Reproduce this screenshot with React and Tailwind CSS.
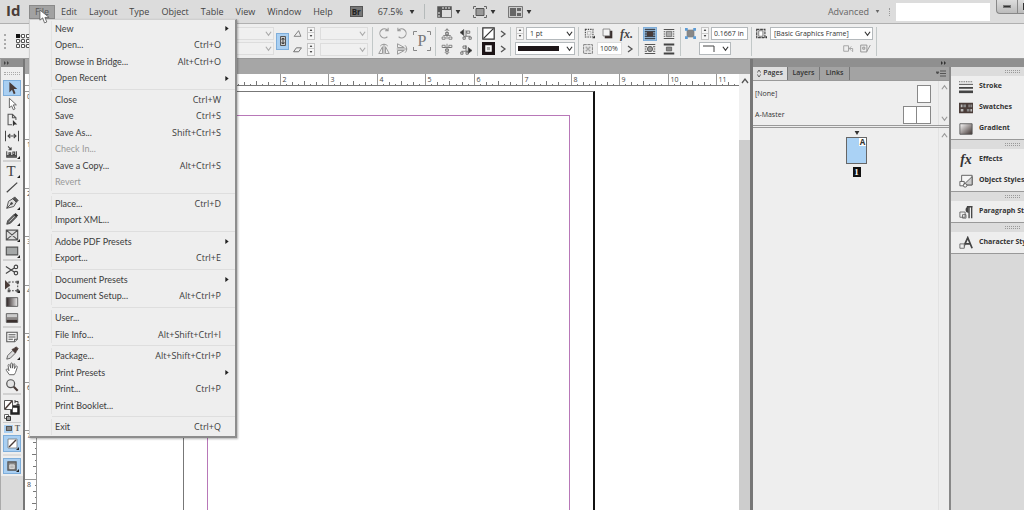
import { Fragment } from 'react';

const fileMenu = [
  [
    { label: 'New', sub: true },
    { label: 'Open...', keys: 'Ctrl+O' },
    { label: 'Browse in Bridge...', keys: 'Alt+Ctrl+O' },
    { label: 'Open Recent', sub: true },
  ],
  [
    { label: 'Close', keys: 'Ctrl+W' },
    { label: 'Save', keys: 'Ctrl+S' },
    { label: 'Save As...', keys: 'Shift+Ctrl+S' },
    { label: 'Check In...', disabled: true },
    { label: 'Save a Copy...', keys: 'Alt+Ctrl+S' },
    { label: 'Revert', disabled: true },
  ],
  [{ label: 'Place...', keys: 'Ctrl+D' }, { label: 'Import XML...' }],
  [{ label: 'Adobe PDF Presets', sub: true }, { label: 'Export...', keys: 'Ctrl+E' }],
  [{ label: 'Document Presets', sub: true }, { label: 'Document Setup...', keys: 'Alt+Ctrl+P' }],
  [{ label: 'User...' }, { label: 'File Info...', keys: 'Alt+Shift+Ctrl+I' }],
  [
    { label: 'Package...', keys: 'Alt+Shift+Ctrl+P' },
    { label: 'Print Presets', sub: true },
    { label: 'Print...', keys: 'Ctrl+P' },
    { label: 'Print Booklet...' },
  ],
  [{ label: 'Exit', keys: 'Ctrl+Q' }],
];

const menus = ['Edit', 'Layout', 'Type', 'Object', 'Table', 'View', 'Window', 'Help'];

// Small drawings, all on a 16x16 grid
const icons = {
  select: <path d="M5 1v12l3-3 2 5 2-1-2-5h4z" fill="#4a3c38" />,
  direct: <path d="M5 1.500v11l2.500-2.500 2 4.500 2-1-2-4.500h3.500z" fill="#fff" stroke="#555" />,
  page: (
    <g fill="none" stroke="#555" strokeWidth="1.200">
      <path d="M8 13.500H3.500v-12h5l4 4V8M8.500 1.500v4h4" />
      <path d="M9 8v7l2-2h3z" fill="#333" stroke="none" />
    </g>
  ),
  gap: (
    <path d="M.5 2v12M15.500 2v12M3 8h10M6 5.500L3.500 8 6 10.500M10 5.500L12.500 8 10 10.500" fill="none" stroke="#444" strokeWidth="1.300" />
  ),
  collect: (
    <g fill="none" stroke="#444" strokeWidth="1.200">
      <path d="M2 7v7h11V7M3.500 1.500l3.500 4M7 2.500v3H4M4.500 11V9h2v2zM9 11V8h2v3z" />
      <path d="M2 12.500h11" strokeWidth="2" />
    </g>
  ),
  type: (
    <text x="7" y="14" textAnchor="middle" fontSize="17" fill="#444" fontFamily="Liberation Serif, serif">T</text>
  ),
  line: <path d="M2 14L14 3" stroke="#444" strokeWidth="1.400" />,
  pen: (
    <g stroke="#444" fill="#ddd">
      <path d="M2 14l2-8 5-3 4 4-3 5z" />
      <path d="M9 3l2-2 4 4-2 2z" fill="#555" />
      <path d="M2 14l5-5" />
      <circle cx="7.500" cy="8.500" r="1" fill="#444" />
    </g>
  ),
  pencil: (
    <g>
      <path d="M2 14l1-4 7-7 3 3-7 7z" fill="#666" stroke="#444" />
      <path d="M10 3l2-2 3 3-2 2z" fill="#333" />
      <path d="M5 11l6-6" stroke="#ccc" />
    </g>
  ),
  frame: <path d="M1.500 2.500h13v11h-13zM1.500 2.500l13 11M14.500 2.500l-13 11" fill="#ddd" stroke="#555" strokeWidth="1.300" />,
  rect: <path d="M1.500 3.500h13v9h-13z" fill="#a5a8a8" stroke="#555" strokeWidth="1.300" />,
  scissors: (
    <g fill="none" stroke="#444" strokeWidth="1.300">
      <circle cx="12.500" cy="4.500" r="2" />
      <circle cx="12.500" cy="11.500" r="2" />
      <path d="M1 4l10 6.500M1 12l10-6.500" />
    </g>
  ),
  transform: (
    <g>
      <path d="M4.500 3.500h10v10h-10z" fill="none" stroke="#444" strokeWidth="1.200" strokeDasharray="2 1.500" />
      <path d="M0 1v11l6-5z" fill="#4a3c38" />
      <path d="M13 2h3v3h-3zM13 12h3v3h-3zM3 12h3v3H3z" fill="#555" />
    </g>
  ),
  gradient: <path d="M1.500 3h13v10h-13z" fill="url(#gradH)" stroke="#555" />,
  feather: (
    <g>
      <path d="M1.500 3h13v10h-13z" fill="#ccc" stroke="#555" />
      <path d="M2 7h12v3H2z" fill="#8a8685" />
      <path d="M2 10h12v3H2z" fill="#3b302e" />
    </g>
  ),
  note: (
    <g fill="#f4f4f4" stroke="#555" strokeWidth="1.200">
      <path d="M2 2.500h12v8l-3 3H2z" />
      <path d="M4 5.500h8M4 8h8M4 10.500h5M14 10.500h-3v3" />
    </g>
  ),
  dropper: (
    <g>
      <path d="M2 15l1-4 6-6 3 3-6 6z" fill="#ddd" stroke="#555" />
      <path d="M8 4l2-1 3-2 2 2-2 3-1 2z" fill="#4a3c38" stroke="#4a3c38" />
    </g>
  ),
  hand: (
    <path
      d="M5 14.500L1.500 9.500c-.5-1.500 1-2 2-1l1 1.500L3.500 4c0-1.500 1.500-1.500 2-.2L6.500 7V2.200c.2-1.500 1.800-1.500 2 0V7l1-4.300c.5-1.200 2-.8 1.800.5L10.800 7.500l1.500-2.500c.8-1 2-.2 1.700 1l-2 6-1.500 2.500z"
      fill="#fff" stroke="#555"
    />
  ),
  zoom: (
    <g fill="none">
      <circle cx="6.500" cy="6.500" r="4.500" fill="#e4e4e4" stroke="#555" strokeWidth="1.400" />
      <path d="M10 10l4.500 4.500" stroke="#4a3c38" strokeWidth="2.400" />
    </g>
  ),
  applyFill: (
    <g>
      <path d="M1.500 1.500h13v13h-13z" fill="#fff" stroke="#666" />
      <path d="M3 13L13 3" stroke="#4a3c38" strokeWidth="2" />
    </g>
  ),
  normalView: (
    <g>
      <path d="M2.500 2.500h11v11h-11z" fill="#888" stroke="#555" strokeWidth="1.500" />
      <path d="M5 6.500h6v5H5z" fill="#bbb" stroke="#eee" />
    </g>
  ),
  angle: <path d="M2 13h12L10 3z" fill="none" stroke="#666" strokeWidth="1.400" />,
  shear: <path d="M1 12h9l5-7H6z" fill="none" stroke="#666" strokeWidth="1.600" />,
  rotateCw: <path d="M12.500 13a6 6 0 1 1 .5-8.500M13.500 1v4h-4" fill="none" stroke="#999" strokeWidth="1.400" />,
  rotateCcw: <path d="M3.500 13A6 6 0 1 0 3 4.500M2.500 1v4h4" fill="none" stroke="#999" strokeWidth="1.400" />,
  flipH: (
    <path d="M8 1v14M1 14l5-9v9zM15 14l-5-9v9zM3 4a6 5 0 0 1 10 0" fill="none" stroke="#999" strokeWidth="1.300" />
  ),
  flipV: (
    <path d="M1 8h14M2 1l9 5H2zM2 15l9-5H2zM12 3a5 6 0 0 1 0 10" fill="none" stroke="#999" strokeWidth="1.300" />
  ),
  treeUp: <path d="M8 1v14M5 4l3-3 3 3M6 6h4v3H6zM3 10h10M1.500 12h4v3h-4zM10.500 12h4v3h-4z" fill="none" stroke="#666" />,
  treeLeft: (
    <g fill="none" stroke="#555">
      <path d="M8 3v8M5 11h9M4 12h3v3H4zM12 12h3v3h-3zM9 4h4v3H9z" />
      <path d="M0 6l5-4v8z" fill="#333" />
    </g>
  ),
  treeDown: <path d="M8 1v14M5 12l3 3 3-3M6 8h4v3H6zM3 6h10M1.500 3h4v3h-4zM10.500 3h4v3h-4z" fill="none" stroke="#666" />,
  treeRight: (
    <g fill="none" stroke="#555">
      <path d="M8 3v8M2 11h9M1 12h3v3H1zM8 12h3v3H8zM4 4h4v3H4z" />
      <path d="M16 10l-5-4v8z" fill="#333" />
    </g>
  ),
  noFill: (
    <g>
      <path d="M1 1h14v14H1z" fill="#fff" stroke="#333" strokeWidth="1.500" />
      <path d="M2 14L14 2" stroke="#333" strokeWidth="1.500" />
    </g>
  ),
  strokeBox: (
    <g>
      <path d="M0 0h16v16H0z" fill="#1c1416" />
      <path d="M5 5h6v6H5z" fill="#aaa" stroke="#fff" strokeWidth="2" />
    </g>
  ),
  dashed: (
    <g fill="none" stroke="#444">
      <path d="M2 2h11v11H2z" strokeWidth="1.600" strokeDasharray="2 1.500" />
      <path d="M5 5h5v5H5z" stroke="#aaa" />
      <path d="M12 15h4v-4z" fill="#333" stroke="none" />
    </g>
  ),
  shadow: (
    <g>
      <path d="M4 4h11v11H4z" fill="#3b302e" />
      <path d="M1.500 1.500h10v10h-10z" fill="#f4f4f4" stroke="#666" />
    </g>
  ),
  opacity: (
    <g fill="none" stroke="#777">
      <path d="M1 1h14v14H1z" strokeWidth="1.500" strokeDasharray="5 1" />
      <path d="M4 4h3v3H4zM9 4h3v3H9zM6 6h4v4H6zM4 9h3v3H4zM9 9h3v3H9z" fill="#aaa" stroke="none" />
    </g>
  ),
  wrapNone: (
    <g>
      <path d="M1 2h14M1 5h14M1 8h14M1 11h14M1 14h14" stroke="#3d4650" strokeWidth="1.700" />
      <path d="M4 5h8v6H4z" fill="#4a3c38" />
    </g>
  ),
  wrapBox: (
    <g>
      <path d="M1 2h14M1 14h14M1 5h2M1 8h2M1 11h2M13 5h2M13 8h2M13 11h2" stroke="#555" strokeWidth="1.600" />
      <path d="M4.500 4.500h7v7h-7z" fill="#aaa" stroke="#666" />
    </g>
  ),
  wrapShape: (
    <g>
      <path d="M1 2h14M1 14h14M1 5h3M1 8h2M1 11h3M12 5h3M13 8h2M12 11h3" stroke="#555" strokeWidth="1.600" />
      <circle cx="8" cy="8" r="3.500" fill="#999" stroke="#444" />
    </g>
  ),
  wrapJump: (
    <g>
      <path d="M1 2h14M1 14h14" stroke="#444" strokeWidth="2.400" />
      <path d="M4.500 5.500h7v5h-7z" fill="#888" stroke="#555" />
    </g>
  ),
  fit: (
    <g>
      <path d="M3 3h10v10H3z" fill="#888" stroke="#777" />
      <path d="M0 0h4v4H0zM12 0h4v4h-4zM0 12h4v4H0zM12 12h4v4h-4z" fill="#5b9bd5" />
    </g>
  ),
  frameStyle: (
    <g>
      <path d="M1 2h12v12H1z" fill="#ddd" stroke="#444" strokeWidth="1.600" strokeDasharray="4 1" />
      <path d="M4 4h6v8H4z" fill="#fff" stroke="#555" />
      <path d="M14 12h2v3h-2z" fill="#333" />
    </g>
  ),
  clearStyle: (
    <g fill="none" stroke="#999" strokeWidth="1.200">
      <path d="M1 4h7v8H1zM9 8h5v5M9 8l3-3M9 8l3 3" />
    </g>
  ),
  clearAttr: (
    <g fill="none" stroke="#888" strokeWidth="1.200">
      <path d="M1 3h9v10H1zM4 6h3v3H4zM15 3l-5 9" />
    </g>
  ),
  strokePanel: (
    <g stroke="#444">
      <path d="M0 2h16" strokeDasharray="1 1" />
      <path d="M0 5h16" />
      <path d="M0 9h16" strokeWidth="2" />
      <path d="M0 13.500h16" strokeWidth="3" />
    </g>
  ),
  swatches: (
    <g>
      <path d="M0 2h16v12H0z" fill="#4a3c38" />
      <path d="M2 4h2v3H2zM11 4h1v3h-1zM2 9h3v3H2zM13 9h2v3h-2z" fill="#bbb" />
      <path d="M5 4h3v3H5zM13 4h2v3h-2zM9 9h3v3H9z" fill="#888" />
    </g>
  ),
  gradientPanel: <path d="M1 2h14v12H1z" fill="url(#gradD)" stroke="#555" />,
  objStyles: (
    <g fill="#f6f6f6" stroke="#555">
      <path d="M3 1.500h12v11H3z" />
      <path d="M15 3v9.500H5z" fill="#ccc" />
      <path d="M1 8.500h5v5H1z" />
      <circle cx="7" cy="13" r="2" />
    </g>
  ),
  paraStyles: (
    <g>
      <path d="M14.500 15V2M11.500 15V2M15.500 2H9" stroke="#444" strokeWidth="1.500" />
      <path d="M11 2a3 3 0 0 0 0 7z" fill="#444" />
      <path d="M1 8h6v6H1zM4 11h4v4H4z" fill="#eee" stroke="#666" />
    </g>
  ),
  charStyles: (
    <g>
      <path d="M5 13l5-11 5 12M7 9h6" stroke="#444" strokeWidth="2" fill="none" />
      <path d="M1 9h5v5H1z" fill="#eee" stroke="#666" />
    </g>
  ),
};

const Icon = ({ name, className = 'size-3' }) => (
  <svg viewBox="0 0 16 16" className={`shrink-0 ${className}`}>{icons[name]}</svg>
);

const Chevron = ({ dir = 'down', className = 'size-2 text-[#555]' }) => {
  const d = { down: 'M1 2l3 4 3-4', up: 'M1 6l3-4 3 4', right: 'M2 1l4 3-4 3' }[dir];
  return (
    <svg viewBox="0 0 8 8" className={`shrink-0 ${className}`}>
      <path d={d} fill="none" stroke="currentColor" strokeWidth="1.300" />
    </svg>
  );
};

const Caret = () => (
  <svg viewBox="0 0 6 5" className="h-[4px] w-[6px] shrink-0">
    <path d="M0 0h6L3 5z" fill="#333" />
  </svg>
);

const Spinner = () => (
  <div className="grid h-[13px] w-[8px] shrink-0 grid-rows-2 border border-[#c4c4c4] bg-[#f6f6f6]">
    <button aria-label="Increase" className="flex items-center justify-center border-b border-[#ccc]">
      <svg viewBox="0 0 4 3" className="h-[2px] w-[4px]"><path d="M0 3h4L2 0z" fill="#444" /></svg>
    </button>
    <button aria-label="Decrease" className="flex items-center justify-center">
      <svg viewBox="0 0 4 3" className="h-[2px] w-[4px]"><path d="M0 0h4L2 3z" fill="#444" /></svg>
    </button>
  </div>
);

// Drop-down field; children are drawn over it (a line sample for instance)
const Combo = ({ label, value = '', className, faded, children }) => (
  <div className={`relative h-[13px] shrink-0 ${className}`}>
    <select
      aria-label={label}
      className={`block h-full w-full appearance-none border pl-[3px] text-[7px] leading-[10px] text-[#333] ${
        faded ? 'border-[#ddd] bg-[#f0f0f0]' : 'border-[#b4b9bc] bg-white'
      }`}
    >
      <option>{value}</option>
    </select>
    {children}
    <div className="pointer-events-none absolute inset-y-0 right-[2px] flex items-center">
      <Chevron className={faded ? 'size-[7px] text-[#aaa]' : 'size-[7px] text-[#333]'} />
    </div>
  </div>
);

const IconButton = ({ name, active, className = 'size-3' }) => (
  <button aria-label={name} className={`flex items-center justify-center ${active ? 'bg-[#a9cff2] outline outline-[#7eaedb]' : ''}`}>
    <Icon name={name} className={className} />
  </button>
);

const Group = ({ className, children }) => (
  <div className={`flex h-[29px] shrink-0 flex-col justify-between border-r border-[#c2c8c8] ${className}`}>{children}</div>
);

const Row = ({ className = '', children }) => (
  <div className={`flex h-[14px] items-center ${className}`}>{children}</div>
);

const FileMenu = () => (
  <div
    role="menu"
    className="absolute top-full left-0 z-20 flex h-[419px] w-[208px] flex-col border-t border-l border-r-2 border-b-2 border-[#d0d0d0] border-r-[#8d8d8d] border-b-[#8d8d8d] bg-[#eeeeee] pt-px text-[9px] text-[#3c3c3c] shadow-[1px_1px_2px_rgba(0,0,0,0.3)]"
  >
    {fileMenu.map((group, g) => (
      <Fragment key={g}>
        {g > 0 && (
          <div className="flex h-[5px] shrink-0 items-center pl-[22px]">
            <div className="h-px w-full bg-[#dedede]" />
          </div>
        )}
        {group.map((item) => (
          <button
            key={item.label}
            role="menuitem"
            disabled={item.disabled}
            className={`ml-[21px] flex min-h-0 flex-1 items-center justify-between border-l border-[#e2e2e2] pr-[14px] pl-[3px] leading-3 ${
              item.disabled ? 'text-[#999]' : ''
            }`}
          >
            <span className="font-['Lato',sans-serif]">{item.label}</span>
            {item.keys && <span>{item.keys}</span>}
            {item.sub && (
              <svg viewBox="0 0 4 6" className="-mr-2 h-[5px] w-[4px]"><path d="M0 0v6l4-3z" fill="#222" /></svg>
            )}
          </button>
        ))}
      </Fragment>
    ))}
  </div>
);

const MenuBar = () => (
  <header className="flex h-[24px] shrink-0 items-center border-b border-[#b0b0b0] bg-[#dcdcdc] text-[9px] text-[#444]">
    <span className="mt-[2px] w-[29px] shrink-0 self-start pl-[6px] text-[15px] leading-4 font-bold text-[#4a3c38]">Id</span>
    <nav className="flex items-center">
      <div className="relative">
        <button className="flex h-[14px] w-[26px] items-center justify-center border border-[#8a8a8a] bg-[#a2a2a2] text-[#555]">File</button>
        <FileMenu />
        <svg viewBox="0 0 12 16" className="pointer-events-none absolute top-[4px] left-[10px] z-30 h-[15px] w-[11px]">
          <path d="M1 1v11l3-2.500L6 15l2.500-1-2-5H11z" fill="#fff" stroke="#666" />
        </svg>
      </div>
      {menus.map((m) => (
        <button key={m} className="px-[6px]">{m}</button>
      ))}
    </nav>
    <div className="ml-[11px] flex items-center">
      <button className="flex h-[11px] w-[13px] items-center justify-center border border-[#555] bg-[#777] text-[8px] leading-[8px] font-bold text-[#222]">Br</button>
      <button className="ml-[15px] flex items-center gap-[6px]">67.5% <Caret /></button>
      <div className="ml-[9px] h-[15px] w-px bg-[#b5baba]" />
      <button aria-label="View options" className="ml-3 flex items-center gap-[3px]">
        <svg viewBox="0 0 15 12" className="h-[12px] w-[15px]">
          <path d="M.5.500h14v11H.5z" fill="#ddd" stroke="#777" />
          <path d="M1 1h13v3H1zM1 4h4v7H1z" fill="#555" />
          <path d="M6 1v2M9 1v2M12 1v2M1 7h2M1 10h2" stroke="#eee" />
        </svg>
        <Caret />
      </button>
      <button aria-label="Screen mode" className="ml-3 flex items-center gap-[3px]">
        <svg viewBox="0 0 14 12" className="h-[12px] w-[14px]">
          <path d="M3 2.500h8v7H3z" fill="#999" stroke="#555" />
          <path d="M.5 3V.500H3M11 .500h2.500V3M13.500 9v2.500H11M3 11.500H.5V9" fill="none" stroke="#666" />
        </svg>
        <Caret />
      </button>
      <button aria-label="Arrange documents" className="ml-3 flex items-center gap-[3px]">
        <svg viewBox="0 0 15 12" className="h-[12px] w-[15px]">
          <path d="M.5.500h14v11H.5z" fill="#ccc" stroke="#777" />
          <path d="M2 2h6v8H2zM9 2h4v3H9zM9 7h4v3H9z" fill="#666" />
        </svg>
        <Caret />
      </button>
    </div>
    <div className="ml-auto flex h-full items-center">
      <button className="flex items-center gap-[6px] text-[#666]">
        Advanced
        <svg viewBox="0 0 6 5" className="h-[3px] w-[5px]"><path d="M0 0h6L3 5z" fill="#666" /></svg>
      </button>
      <div className="mr-[6px] ml-[9px] h-[8px] w-px border-l border-dotted border-[#999]" />
      <input aria-label="Search" className="h-[18px] w-[94px] bg-white" />
      <div className="ml-[6px] flex h-[14px] w-[28px] self-start overflow-hidden rounded-bl border-b border-l border-[#888] bg-linear-to-b from-[#ddd] to-[#bbb]">
        <button aria-label="Minimize" className="flex w-[21px] shrink-0 items-center justify-center border-r border-[#888]">
          <span className="h-[3px] w-[8px] border border-[#777] bg-[#333]" />
        </button>
        <button aria-label="Maximize" className="flex w-[21px] shrink-0 items-center pl-[5px]">
          <span className="size-[7px] border-2 border-[#333]" />
        </button>
      </div>
    </div>
  </header>
);

const ControlBar = () => (
  <div className="flex h-[35px] shrink-0 items-center overflow-hidden border-b border-[#999] bg-[#eeeeee]">
    <Group className="w-[373px]">
      <div className="flex h-full items-center">
        <div className="ml-[4px] h-[15px] w-[3px] border-l-2 border-dotted border-[#aaa]" />
        <svg viewBox="0 0 14 14" className="ml-[9px] size-[14px]">
          <path d="M2 2h10v10H2zM7 2v10M2 7h10" fill="none" stroke="#888" strokeDasharray="1 1" />
          <g fill="#fff" stroke="#555">
            <path d="M5.500.500h3v3h-3zM10.500.500h3v3h-3zM.5 5.500h3v3h-3zM5.500 5.500h3v3h-3zM10.500 5.500h3v3h-3zM.5 10.500h3v3h-3zM5.500 10.500h3v3h-3zM10.500 10.500h3v3h-3z" />
          </g>
          <path d="M0 0h4v4H0z" fill="#111" />
        </svg>
        <div className="ml-auto flex w-[77px] flex-col gap-[2px]">
          <Combo label="Scale X" faded className="w-full" />
          <Combo label="Scale Y" faded className="w-full" />
        </div>
        <button aria-label="Constrain proportions" className="ml-[2px] flex h-[17px] w-[13px] items-center justify-center border border-[#7eaedb] bg-[#a9cff2]">
          <svg viewBox="0 0 8 12" className="h-[12px] w-[8px]">
            <path d="M1.500 1.500h5v9h-5z" fill="#ccc" stroke="#555" />
            <path d="M3 5V3.500h2V5M3 7v1.500h2V7M4 4v4" fill="none" stroke="#444" />
          </svg>
        </button>
        <div className="mx-[4px] flex flex-col gap-[2px]">
          <Row className="gap-[5px]"><Icon name="angle" className="size-[9px]" /><Spinner /><Combo label="Rotation" faded className="w-[48px]" /></Row>
          <Row className="gap-[5px]"><Icon name="shear" className="size-[9px]" /><Spinner /><Combo label="Shear" faded className="w-[48px]" /></Row>
        </div>
      </div>
    </Group>
    <Group className="w-[63px]">
      <div className="flex h-full items-center justify-center gap-[5px]">
        <div className="grid grid-cols-2 gap-x-[6px] gap-y-1">
          {['rotateCw', 'rotateCcw', 'flipH', 'flipV'].map((n) => (
            <IconButton key={n} name={n} className="size-[12px]" />
          ))}
        </div>
        <svg viewBox="0 0 18 20" className="h-[20px] w-[18px]">
          <path d="M.5 4V.500H4M14 .500h3.500V4M17.500 16v3.500H14M4 19.500H.5V16" fill="none" stroke="#888" />
          <text x="9" y="15" textAnchor="middle" fontSize="16" fill="#777" fontFamily="Liberation Serif, serif">P</text>
        </svg>
      </div>
    </Group>
    <Group className="w-[42px]">
      <Row className="justify-center gap-[7px]"><IconButton name="treeUp" /><IconButton name="treeLeft" /></Row>
      <Row className="justify-center gap-[7px]"><IconButton name="treeDown" /><IconButton name="treeRight" /></Row>
    </Group>
    <Group className="w-[33px]">
      <Row className="gap-1 pl-[4px]"><IconButton name="noFill" className="size-[13px]" /><Chevron dir="right" /></Row>
      <Row className="gap-1 pl-[4px]"><IconButton name="strokeBox" className="size-[13px]" /><Chevron dir="right" /></Row>
    </Group>
    <Group className="w-[68px]">
      <Row className="justify-end gap-[2px] pr-[3px]"><Spinner /><Combo label="Weight" value="1 pt" className="w-[49px]" /></Row>
      <Row className="justify-end pr-[3px]">
        <Combo label="Stroke type" className="w-[60px]">
          <div className="pointer-events-none absolute top-[4px] left-[3px] h-[5px] w-[41px] bg-[#1c1416]" />
        </Combo>
      </Row>
    </Group>
    <Group className="w-[60px]">
      <Row className="gap-[7px] pl-[5px]">
        <IconButton name="dashed" className="size-[11px]" />
        <IconButton name="shadow" className="size-[11px]" />
        <button className="font-['Liberation_Serif',serif] text-[12px] leading-3 font-bold text-[#444] italic">fx.</button>
      </Row>
      <Row className="gap-[4px] pl-[4px]">
        <IconButton name="opacity" className="size-[10px]" />
        <input aria-label="Opacity" defaultValue="100%" className="h-[13px] w-[25px] border border-[#ddd] bg-white pl-[2px] text-[7px] leading-[10px] text-[#333]" />
        <Chevron dir="right" />
      </Row>
    </Group>
    <Group className="w-[42px]">
      <Row className="justify-center gap-[7px]"><IconButton name="wrapNone" active /><IconButton name="wrapBox" /></Row>
      <Row className="justify-center gap-[7px]"><IconButton name="wrapShape" /><IconButton name="wrapJump" /></Row>
    </Group>
    <Group className="w-[71px]">
      <Row className="pl-[4px]">
        <IconButton name="fit" className="size-[11px]" />
        <div className="ml-[5px] flex gap-[2px]">
          <Spinner />
          <input aria-label="Corner size" defaultValue="0.1667 in" className="h-[13px] w-[37px] border border-[#b4b9bc] bg-white pl-[2px] text-[7px] leading-[10px] text-[#333]" />
        </div>
      </Row>
      <Row className="pl-[18px]">
        <Combo label="Corner shape" className="w-[32px]">
          <svg viewBox="0 0 12 7" className="pointer-events-none absolute top-[3px] left-[4px] h-[7px] w-[12px]">
            <path d="M0 1h11v6" fill="none" stroke="#444" />
          </svg>
        </Combo>
      </Row>
    </Group>
    <Group className="w-[125px]">
      <Row className="gap-[3px] pl-[4px]">
        <IconButton name="frameStyle" className="size-[11px]" />
        <Combo label="Object style" value="[Basic Graphics Frame]" className="w-[103px]" />
      </Row>
      <Row className="justify-end gap-[6px] pr-[5px]"><IconButton name="clearStyle" className="size-[11px]" /><IconButton name="clearAttr" className="size-[11px]" /></Row>
    </Group>
  </div>
);

const toolGroups = [
  ['select', 'direct', 'page', 'gap', 'collect'],
  ['type', 'line', 'pen', 'pencil', 'frame', 'rect'],
  ['scissors', 'transform', 'gradient', 'feather'],
  ['note', 'dropper', 'hand', 'zoom'],
];
const flyouts = ['collect', 'type', 'pen', 'pencil', 'frame', 'rect', 'transform', 'dropper'];

const Corner = () => (
  <svg viewBox="0 0 3 3" className="absolute right-px bottom-px size-[3px]"><path d="M3 0v3H0z" fill="#222" /></svg>
);

const ToolBar = () => (
  <aside className="flex w-[25px] shrink-0 flex-col border-r-2 border-l border-r-[#777] border-l-[#aaa] bg-[#dadada]">
    <div className="flex h-[8px] shrink-0 items-center bg-[#8f8f8f] pl-[3px]">
      <svg viewBox="0 0 6 4" className="h-[4px] w-[6px]"><path d="M0 0v4l2-2zM3 0v4l2-2z" fill="#444" /></svg>
    </div>
    <div className="flex flex-col bg-[#eeeeee] px-[2px]">
      <div className="flex h-[13px] items-center px-px"><div className="h-[3px] w-full border-y border-dotted border-[#aaa]" /></div>
      {toolGroups.map((group, g) => (
        <div key={g} className="mb-px flex flex-col border-b-2 border-[#d2d2d2]">
          {group.map((t) => (
            <button
              key={t}
              aria-label={t}
              className={`relative flex h-4 items-center justify-center ${t === 'select' ? 'border border-[#7eaedb] bg-[#a9cff2]' : ''}`}
            >
              <Icon name={t} className="size-[14px]" />
              {flyouts.includes(t) && <Corner />}
            </button>
          ))}
        </div>
      ))}
      <button aria-label="Fill and stroke" className="flex h-[27px] items-center justify-center border-b border-[#ccc]">
        <svg viewBox="0 0 18 24" className="h-[24px] w-[18px]">
          <path d="M8.500 9.500h7v7h-7z" fill="#fff" stroke="#222" strokeWidth="2.500" />
          <path d="M1.500 3.500h8v9h-8z" fill="#fff" stroke="#555" />
          <path d="M2 12L9 4" stroke="#4a3c38" strokeWidth="1.500" />
          <path d="M12 4.500h3v3M12 3v3M13.500 7.500h3" stroke="#444" fill="none" />
          <path d="M1.500 17.500h4v4h-4z" fill="#fff" stroke="#666" />
          <path d="M3.500 19.500h4v4h-4z" fill="#999" stroke="#333" />
        </svg>
      </button>
      <div className="flex h-[11px] items-center justify-between px-px">
        <button aria-label="Format container" className="flex h-[8px] w-[9px] items-center justify-center bg-[#a9cff2]">
          <span className="h-[5px] w-[6px] border border-[#555] bg-[#888]" />
        </button>
        <button className="font-['Liberation_Serif',serif] text-[8px] leading-2 font-bold text-[#666]">T</button>
      </div>
      <button aria-label="Apply none" className="relative mt-px flex h-[17px] items-center justify-center border border-[#7eaedb] bg-[#a9cff2]">
        <Icon name="applyFill" className="size-[11px]" /><Corner />
      </button>
      <div className="my-[2px] h-[2px] bg-[#ddd]" />
      <button aria-label="Normal view" className="relative mb-[2px] flex h-[16px] items-center justify-center border border-[#7eaedb] bg-[#a9cff2]">
        <Icon name="normalView" className="size-[12px]" /><Corner />
      </button>
    </div>
  </aside>
);

// Ruler geometry: one inch at 67.5% zoom
const INCH = 48.45;
const eighths = Array.from({ length: 140 }, (_, i) => i - 24);
const tickSize = (i) => (i % 8 === 0 ? 12 : i % 4 === 0 ? 5 : i % 2 === 0 ? 4 : 2);

const TopRuler = () => (
  <svg className="h-[12px] w-full bg-white">
    {eighths.map((i) => {
      const x = Math.round(146 + (i * INCH) / 8) + 0.5;
      return (
        <g key={i}>
          <path d={`M${x} 12v${-tickSize(i)}`} stroke={i % 8 ? '#777' : '#999'} />
          {i % 8 === 0 && i >= 16 && i <= 88 && <text x={x + 2} y="8" fontSize="7" fill="#444">{i / 8}</text>}
        </g>
      );
    })}
    <path d="M0 11.500h2000" stroke="#777" />
  </svg>
);

const SideRuler = () => (
  <svg className="h-full w-[12px] bg-white">
    {eighths.map((i) => {
      const y = Math.round(5 + (i * INCH) / 8) + 0.5;
      return (
        <g key={i}>
          <path d={`M12 ${y}h${-tickSize(i)}`} stroke={i % 8 ? '#777' : '#999'} />
          {i % 8 === 0 && i >= 0 && i <= 64 && <text x="2" y={y + 7} fontSize="7" fill="#444">{i / 8}</text>}
        </g>
      );
    })}
    <path d="M11.500 0v2000" stroke="#999" />
  </svg>
);

const DocumentWindow = () => (
  <main className="flex min-w-0 flex-1 flex-col bg-white">
    <div className="h-[15px] shrink-0 bg-[#a6a6a6]" />
    <div className="grid min-h-0 flex-1 grid-cols-[12px_1fr_11px]">
      <div className="grid min-h-0 grid-rows-[12px_1fr] overflow-hidden">
        <div className="border-r border-b border-[#999]" />
        <SideRuler />
      </div>
      <div className="flex min-h-0 min-w-0 flex-col overflow-hidden">
        <TopRuler />
        <div className="flex min-h-0 flex-1 overflow-hidden pt-[5px] pl-[146px]">
          {/* page with its margin guides, running off the bottom edge */}
          <div className="h-[535px] w-[412px] shrink-0 border-t border-r-2 border-l border-[#777] border-r-[#111] p-[23px]">
            <div className="h-full border border-[#b878b8]" />
          </div>
        </div>
      </div>
      <div className="flex flex-col bg-[#cdcdcd]">
        <div className="flex h-[66px] justify-center bg-[#f0f0f0] pt-[3px]"><Chevron dir="up" /></div>
      </div>
    </div>
  </main>
);

const PagesPanel = () => (
  <section className="flex w-[201px] shrink-0 flex-col border-r-2 border-l-3 border-[#777] border-r-[#888] bg-[#eeeeee] text-[7px] text-[#333]">
    <div className="flex h-[14px] shrink-0 items-stretch border-b border-[#999] bg-[#a3a3a3] font-semibold">
      <button className="flex w-[35px] items-center justify-center gap-[2px] border-r border-[#777] bg-[#dfdfdf]">
        <svg viewBox="0 0 4 8" className="h-[7px] w-[4px]"><path d="M0 3l2-3 2 3M0 5l2 3 2-3" fill="none" stroke="#555" /></svg>
        Pages
      </button>
      <button className="w-[32px] border-r border-[#777]">Layers</button>
      <button className="w-[30px] border-r border-[#777]">Links</button>
      <button aria-label="Panel menu" className="mr-[3px] ml-auto flex items-center">
        <svg viewBox="0 0 10 7" className="h-[7px] w-[10px]"><path d="M0 2h3L1.500 4zM4 1h6M4 3.500h6M4 6h6" fill="#444" stroke="#555" /></svg>
      </button>
    </div>
    <div className="flex h-[45px] shrink-0 border-b border-[#999]">
      <div className="flex flex-1 flex-col gap-px pt-[3px] pr-[7px] pl-[2px]">
        <div className="flex h-[20px] items-center justify-between">
          [None]
          <div className="h-[18px] w-[14px] border border-[#888] bg-white" />
        </div>
        <div className="flex h-[20px] items-center justify-between">
          A-Master
          <div className="flex h-[18px] w-[28px] border border-[#888] bg-white"><div className="w-1/2 border-r border-[#888]" /></div>
        </div>
      </div>
      <div className="flex w-[11px] flex-col items-center justify-between border-l border-[#e2e2e2] py-[3px]">
        <Chevron dir="up" className="size-[7px] text-[#999]" />
        <Chevron className="size-[7px] text-[#999]" />
      </div>
    </div>
    <div className="mt-px h-px shrink-0 bg-[#999]" />
    <div className="flex flex-1">
      <div className="flex flex-1 flex-col items-center pt-[3px] pl-[22px]">
        <Caret />
        <div className="mt-[2px] flex h-[27px] w-[21px] justify-end border border-[#666] bg-[#aad2f5]">
          <span className="h-[8px] w-[7px] bg-white text-center text-[8px] leading-2 font-bold">A</span>
        </div>
        <span className="mt-[3px] h-[10px] w-[8px] bg-[#111] text-center font-['Liberation_Serif',serif] text-[9px] leading-[10px] font-bold text-white">1</span>
      </div>
      <div className="flex w-[11px] flex-col items-center border-l border-[#e2e2e2] pt-[4px]">
        <Chevron dir="up" className="size-[7px] text-[#999]" />
      </div>
    </div>
  </section>
);

const dock = [
  [['strokePanel', 'Stroke'], ['swatches', 'Swatches'], ['gradientPanel', 'Gradient']],
  [['fx', 'Effects'], ['objStyles', 'Object Styles']],
  [['paraStyles', 'Paragraph St']],
  [['charStyles', 'Character Sty']],
];

const Dock = () => (
  <aside className="min-w-0 flex-1 overflow-hidden bg-[#d9d9d9]">
    {dock.map((group, g) => (
      <div key={g} className="border-b border-[#999] bg-[#eeeeee]">
        <div className="flex h-[9px] items-center bg-[#dcdcdc] pl-[54px]">
          <div className="h-[3px] w-[15px] border-y border-dotted border-[#999]" />
        </div>
        {group.map(([icon, label]) => (
          <button key={label} className="flex h-[21px] items-center gap-[6px] pl-[8px] text-[7px] font-bold whitespace-nowrap text-[#333]">
            {icon === 'fx' ? (
              <span className="w-[14px] font-['Liberation_Serif',serif] text-[14px] leading-4 font-bold italic">fx</span>
            ) : (
              <Icon name={icon} className="size-[14px]" />
            )}
            {label}
          </button>
        ))}
      </div>
    ))}
  </aside>
);

export default function App() {
  return (
    <div className="flex h-screen flex-col overflow-hidden bg-white font-['Open_Sans','Noto_Sans',sans-serif]">
      <svg className="absolute size-0">
        <linearGradient id="gradH"><stop stopColor="#2a2020" /><stop offset="1" stopColor="#eee" /></linearGradient>
        <linearGradient id="gradD" x2="1" y2="1"><stop stopColor="#fff" /><stop offset="1" stopColor="#3b302e" /></linearGradient>
      </svg>
      <MenuBar />
      <ControlBar />
      <div className="flex min-h-0 flex-1">
        <ToolBar />
        <DocumentWindow />
        <div className="flex w-[274px] shrink-0 flex-col">
          <div className="flex h-[8px] shrink-0 items-center border-l-3 border-[#777] bg-[#8f8f8f] pl-[188px]">
            <svg viewBox="0 0 6 4" className="h-[4px] w-[6px]"><path d="M0 0v4l2-2zM3 0v4l2-2z" fill="#333" /></svg>
          </div>
          <div className="flex min-h-0 flex-1">
            <PagesPanel />
            <Dock />
          </div>
        </div>
      </div>
    </div>
  );
}
